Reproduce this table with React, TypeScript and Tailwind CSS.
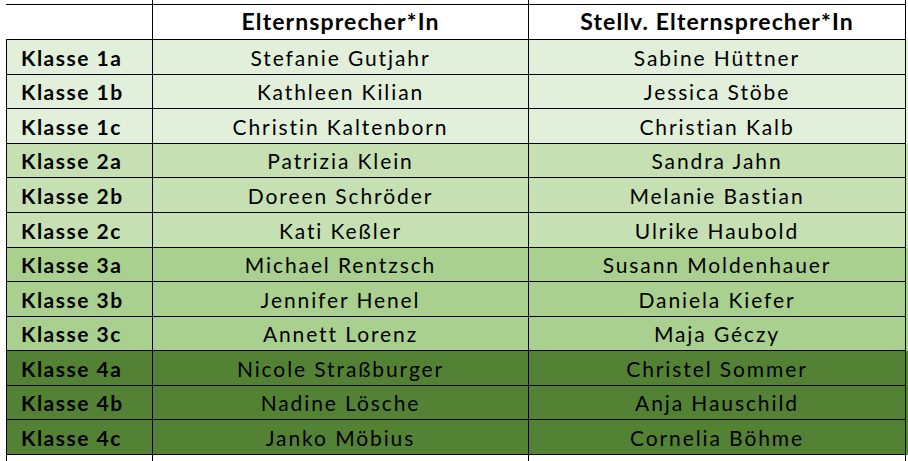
import React from "react";

type Row = { k: string; a: string; b: string; bg: string; h: string };

const rows: Row[] = [
  { k: "Klasse 1a", a: "Stefanie Gutjahr", b: "Sabine Hüttner", bg: "bg-[#e2efda]", h: "h-[35px]" },
  { k: "Klasse 1b", a: "Kathleen Kilian", b: "Jessica Stöbe", bg: "bg-[#e2efda]", h: "h-[34px]" },
  { k: "Klasse 1c", a: "Christin Kaltenborn", b: "Christian Kalb", bg: "bg-[#e2efda]", h: "h-[35px]" },
  { k: "Klasse 2a", a: "Patrizia Klein", b: "Sandra Jahn", bg: "bg-[#c6e0b4]", h: "h-[34px]" },
  { k: "Klasse 2b", a: "Doreen Schröder", b: "Melanie Bastian", bg: "bg-[#c6e0b4]", h: "h-[35px]" },
  { k: "Klasse 2c", a: "Kati Keßler", b: "Ulrike Haubold", bg: "bg-[#c6e0b4]", h: "h-[35px]" },
  { k: "Klasse 3a", a: "Michael Rentzsch", b: "Susann Moldenhauer", bg: "bg-[#a9d08e]", h: "h-[34px]" },
  { k: "Klasse 3b", a: "Jennifer Henel", b: "Daniela Kiefer", bg: "bg-[#a9d08e]", h: "h-[35px]" },
  { k: "Klasse 3c", a: "Annett Lorenz", b: "Maja Géczy", bg: "bg-[#a9d08e]", h: "h-[34px]" },
  { k: "Klasse 4a", a: "Nicole Straßburger", b: "Christel Sommer", bg: "bg-[#548235]", h: "h-[35px]" },
  { k: "Klasse 4b", a: "Nadine Lösche", b: "Anja Hauschild", bg: "bg-[#548235]", h: "h-[34px]" },
  { k: "Klasse 4c", a: "Janko Möbius", b: "Cornelia Böhme", bg: "bg-[#548235]", h: "h-[35px]" },
];

const font = { fontFamily: "Lato, 'Open Sans', 'Liberation Sans', sans-serif" };

export default function App() {
  return (
    <div className="w-[908px] h-[461px] bg-white overflow-hidden pl-[6px] text-black text-[21px] leading-none" style={font}>
      {/* lines above table */}
      <div className="flex h-[4px]">
        <div className="w-[147px] box-border border-r border-black" />
        <div className="w-[376px] box-border border-r border-black" />
        <div className="w-[377px] box-border border-r border-black" />
      </div>
      {/* header */}
      <div className="flex h-[36px] font-bold text-[23px] tracking-[1.1px]">
        <div className="w-[147px] box-border border-t border-r border-b border-black" />
        <div className="w-[376px] box-border border-t border-r border-b border-black flex items-center justify-center pb-[1px]">
          Elternsprecher*In
        </div>
        <div className="w-[377px] box-border border-t border-r border-b border-black flex items-center justify-center pb-[1px]">
          Stellv. Elternsprecher*In
        </div>
      </div>
      {rows.map((r) => (
        <div key={r.k} className={`flex ${r.h} ${r.bg}`}>
          <div className="w-[147px] box-border border-l border-r border-b border-black flex items-center pl-[14px] font-bold tracking-[1.5px]">
            {r.k}
          </div>
          <div className="w-[376px] box-border border-r border-b border-black flex items-center justify-center tracking-[1.9px]">
            {r.a}
          </div>
          <div className="w-[377px] box-border border-r border-b border-black flex items-center justify-center tracking-[1.9px]">
            {r.b}
          </div>
        </div>
      ))}
      <div className="flex h-[7px]">
        <div className="w-[147px] box-border border-l border-r border-black" />
        <div className="w-[376px] box-border border-r border-black" />
        <div className="w-[377px] box-border border-r border-black" />
      </div>
    </div>
  );
}
